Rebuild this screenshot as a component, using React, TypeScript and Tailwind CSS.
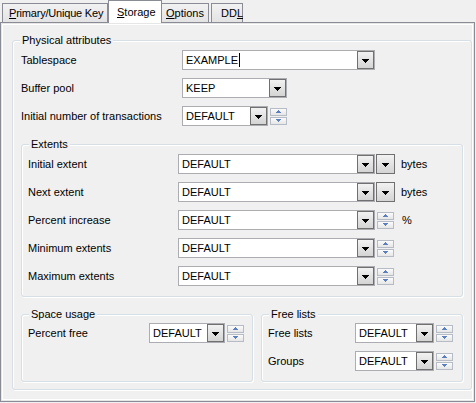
import React from 'react';

function Tri({ color = '#000' }: { color?: string }) {
  return (
    <svg width="7" height="4" viewBox="0 0 7 4" shapeRendering="crispEdges">
      <path d="M0 0h7v1h-1v1h-1v1h-1v1h-1v-1h-1v-1h-1v-1h-1z" fill={color} />
    </svg>
  );
}

function DropBtn({ className }: { className: string }) {
  return (
    <div
      className={`flex shrink-0 items-center justify-center border border-[#707070] bg-gradient-to-b from-[#f2f2f2] to-[#d4d4d4] pt-[1px] ${className}`}
    >
      <Tri />
    </div>
  );
}

function Spin() {
  return (
    <div className="flex h-[17px] w-[17px] shrink-0 flex-col gap-[1px]">
      <div className="flex h-[8px] items-center justify-center border border-[#b6bcc6] bg-gradient-to-b from-[#fbfbfb] to-[#e6e6e6]">
        <svg width="5" height="3" viewBox="0 0 5 3" shapeRendering="crispEdges">
          <path d="M2 0h1v1h1v1h1v1h-5v-1h1v-1h1z" fill="#5c7fc0" />
        </svg>
      </div>
      <div className="flex h-[8px] items-center justify-center border border-[#b6bcc6] bg-gradient-to-b from-[#fbfbfb] to-[#e6e6e6]">
        <svg width="5" height="3" viewBox="0 0 5 3" shapeRendering="crispEdges">
          <path d="M0 0h5v1h-1v1h-1v1h-1v-1h-1v-1h-1z" fill="#5c7fc0" />
        </svg>
      </div>
    </div>
  );
}

function Combo({ value, className, cursor }: { value: string; className: string; cursor?: boolean }) {
  return (
    <div className={`flex h-[20px] shrink-0 items-center border border-[#abadb3] bg-white ${className}`}>
      <div className="flex flex-1 items-center pl-[3px] whitespace-nowrap">
        {value}
        {cursor && <span className="ml-[1px] inline-block h-[14px] w-[1px] bg-black" />}
      </div>
      <DropBtn className="h-[18px] w-[17px]" />
    </div>
  );
}

function GroupBox({ title, className, children }: { title: string; className: string; children: React.ReactNode }) {
  return (
    <div className={`relative shrink-0 rounded-[3px] border border-[#d5dfe5] shadow-[1px_1px_0_#fff,inset_1px_1px_0_#fff] ${className}`}>
      <span className="absolute -top-[7px] left-[7px] bg-[#f0f0f0] px-[2px] leading-[13px]">{title}</span>
      {children}
    </div>
  );
}

export default function App() {
  const extents = [
    { label: 'Initial extent', extra: 'bytes' },
    { label: 'Next extent', extra: 'bytes' },
    { label: 'Percent increase', extra: '%' },
    { label: 'Minimum extents', extra: '' },
    { label: 'Maximum extents', extra: '' },
  ];

  return (
    <div className="h-[403px] w-[476px] overflow-hidden bg-[#f0f0f0] font-['Liberation_Sans',Arial,sans-serif] text-[11px] text-black">
      {/* Tabs */}
      <div className="relative z-10 flex h-[22px] items-end pl-[2px]">
        <div className="flex h-[19px] w-[106px] items-center border border-b-0 border-[#898c95] bg-gradient-to-b from-[#f2f2f2] to-[#e3e3e3] pl-[6px] tracking-[-0.2px]">
          <span><u>P</u>rimary/Unique Key</span>
        </div>
        <div className="-mb-[1px] flex h-[23px] w-[54px] items-start border border-b-0 border-[#898c95] bg-white pl-[8px] pt-[3px]">
          <span><u>S</u>torage</span>
        </div>
        <div className="flex h-[19px] w-[47px] items-center border border-b-0 border-l-0 border-[#898c95] bg-gradient-to-b from-[#f2f2f2] to-[#e3e3e3] pl-[4px]">
          <span><u>O</u>ptions</span>
        </div>
        <div className="ml-[2px] flex h-[19px] w-[32px] items-center border border-b-0 border-[#898c95] bg-gradient-to-b from-[#f2f2f2] to-[#e3e3e3] pl-[9px]">
          <span>DD<u>L</u></span>
        </div>
      </div>

      {/* Panel */}
      <div className="h-[380px] w-[475px] border border-[#898c95] pl-[11px] pt-[17px] shadow-[inset_0_0_0_1px_#e6e6e6,inset_0_0_0_2px_#fff]">
        <GroupBox title="Physical attributes" className="h-[350px] w-[460px]">
          <div className="flex flex-col pl-[8px] pt-[9px]">
            <div className="flex h-[20px] items-center">
              <span className="w-[161px] shrink-0">Tablespace</span>
              <Combo value="EXAMPLE" cursor className="w-[193px]" />
            </div>
            <div className="mt-[8px] flex h-[20px] items-center">
              <span className="w-[161px] shrink-0">Buffer pool</span>
              <Combo value="KEEP" className="w-[105px]" />
            </div>
            <div className="mt-[8px] flex h-[20px] items-center gap-[2px]">
              <span className="w-[159px] shrink-0">Initial number of transactions</span>
              <Combo value="DEFAULT" className="w-[86px]" />
              <Spin />
            </div>

            <GroupBox title="Extents" className="mt-[18px] h-[153px] w-[442px]">
              <div className="flex flex-col gap-[8px] pl-[6px] pt-[9px]">
                {extents.map((r) => (
                  <div key={r.label} className="flex h-[20px] items-center">
                    <span className="w-[150px] shrink-0">{r.label}</span>
                    <Combo value="DEFAULT" className="w-[197px]" />
                    {r.extra === 'bytes' ? (
                      <>
                        <DropBtn className="ml-[1px] h-[20px] w-[19px]" />
                        <span className="ml-[6px]">bytes</span>
                      </>
                    ) : (
                      <>
                        <div className="ml-[2px]">
                          <Spin />
                        </div>
                        {r.extra && <span className="ml-[8px]">{r.extra}</span>}
                      </>
                    )}
                  </div>
                ))}
              </div>
            </GroupBox>

            <div className="mt-[17px] flex gap-[8px]">
              <GroupBox title="Space usage" className="h-[68px] w-[232px]">
                <div className="mt-[8px] flex h-[20px] items-center gap-[2px] pl-[6px]">
                  <span className="w-[119px] shrink-0">Percent free</span>
                  <Combo value="DEFAULT" className="w-[76px]" />
                  <Spin />
                </div>
              </GroupBox>
              <GroupBox title="Free lists" className="h-[68px] w-[202px]">
                <div className="flex flex-col gap-[8px] pl-[6px] pt-[8px]">
                  <div className="flex h-[20px] items-center gap-[2px]">
                    <span className="w-[85px] shrink-0">Free lists</span>
                    <Combo value="DEFAULT" className="w-[79px]" />
                    <Spin />
                  </div>
                  <div className="flex h-[20px] items-center gap-[2px]">
                    <span className="w-[85px] shrink-0">Groups</span>
                    <Combo value="DEFAULT" className="w-[79px]" />
                    <Spin />
                  </div>
                </div>
              </GroupBox>
            </div>
          </div>
        </GroupBox>
      </div>
    </div>
  );
}
